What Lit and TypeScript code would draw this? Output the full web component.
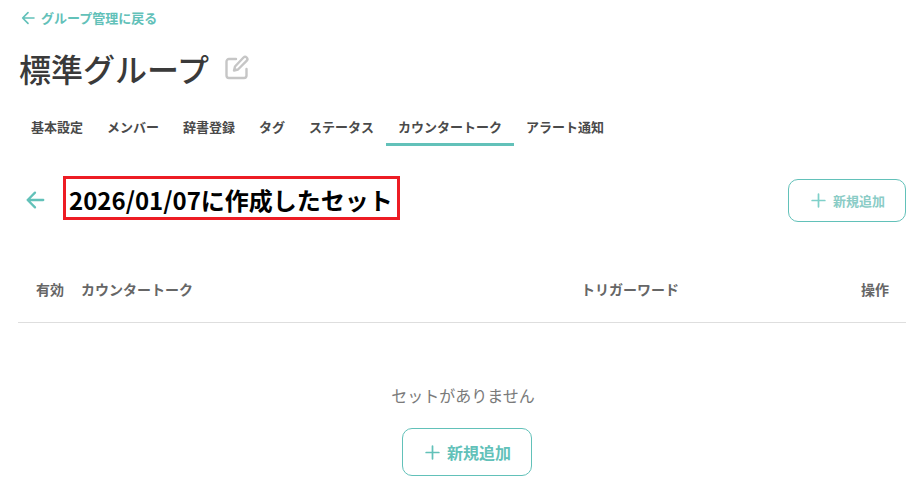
import { LitElement, html, css, svg } from "lit";
import { customElement } from "lit/decorators.js";

const arrow = svg`<path d="M21 12H4M12 4l-8 8 8 8" fill="none" stroke="currentColor" stroke-width="2.500" stroke-linecap="round" stroke-linejoin="round"/>`;
const plus = svg`<path d="M12 4v16M4 12h16" fill="none" stroke="currentColor" stroke-width="2.200" stroke-linecap="round"/>`;
const tabs = ["基本設定", "メンバー", "辞書登録", "タグ", "ステータス", "カウンタートーク", "アラート通知"];

@customElement("app-root")
export class AppRoot extends LitElement {
  static styles = css`
    :host { display: block; width: 921px; height: 501px; overflow: hidden; background: #fff; box-sizing: border-box; padding: 0 15px 0 18px; font-family: "Noto Sans CJK JP", "Noto Sans", sans-serif; color: #3c3c3c; }
    .back { display: flex; align-items: center; gap: 5px; height: 18px; padding: 9px 0 0 2px; color: #62c1b9; font-size: 13px; font-weight: 700; line-height: 18px; }
    .back svg { width: 16px; height: 16px; }
    .title { display: flex; align-items: center; gap: 15px; margin: 16px 0 0 1px; height: 50px; }
    h1 { margin: 0; font-size: 32px; font-weight: 500; line-height: 50px; color: #3a3a3a; }
    .edit { width: 26px; height: 26px; color: #c6c6c6; margin-top: -3px; }
    .tabs { display: flex; margin: 16px 0 0 1px; height: 37px; }
    .tab { padding: 0 12px; font-size: 13px; font-weight: 700; line-height: 35px; color: #4a4a4a; box-sizing: border-box; height: 37px; }
    .tab.on { border-bottom: 3px solid #62c1b9; }
    .head { display: flex; align-items: center; height: 43px; margin-top: 33px; }
    .head .arrow { width: 22px; height: 22px; color: #62c1b9; margin: -2px 17px 0 6px; }
    h2 { margin: -3px 0 0; align-self: flex-start; border: 3px solid #ed1c24; padding: 0 3px; width: 337px; height: 44px; box-sizing: border-box; font-size: 24px; font-weight: 700; line-height: 42px; color: #000; white-space: nowrap; }
    .spacer { flex: 1; }
    .btn { display: inline-flex; align-items: center; justify-content: center; border: 1px solid #62c1b9; border-radius: 10px; background: #fff; color: #62c1b9; box-sizing: border-box; padding: 0; font-family: inherit; font-weight: 700; }
    .btn svg { width: 19px; height: 19px; }
    .btn.small { width: 118px; height: 43px; gap: 5px; font-size: 13px; color: #8accc6; }
    .btn.small svg { color: #7fd0c9; }
    .btn.big { width: 130px; height: 48px; gap: 5px; font-size: 16px; }
    .thead { display: grid; grid-template-columns: 63px 500px 1fr auto; align-items: center; height: 58px; padding-bottom: 4px; margin-top: 38px; border-bottom: 1px solid #dedede; font-size: 14px; font-weight: 700; color: #666; }
    .thead .c0 { padding-left: 18px; }
    .thead .c3 { padding-right: 17px; }
    .empty { display: flex; flex-direction: column; align-items: center; }
    .empty p { margin: 60px 0 0 2px; font-size: 16px; line-height: 24px; color: #7a7a7a; }
    .empty .btn { margin: 21px 0 0 10px; }
  `;

  render() {
    return html`
      <div class="back"><svg viewBox="0 0 24 24">${arrow}</svg><span>グループ管理に戻る</span></div>
      <div class="title">
        <h1>標準グループ</h1>
        <svg class="edit" viewBox="0 0 26 26" fill="none" stroke="currentColor" stroke-width="2.4" stroke-linecap="round" stroke-linejoin="round">
          <path d="M12 5H5a2.500 2.500 0 0 0-2.500 2.500v14A2.500 2.500 0 0 0 5 24h15a2.500 2.500 0 0 0 2.500-2.500V15"/>
          <path d="M11 12.500 19.500 3.500a2.300 2.300 0 0 1 3.300 3.200L14 15.500l-4 1z"/>
        </svg>
      </div>
      <div class="tabs">
        ${tabs.map((t, i) => html`<div class="tab ${i === 5 ? "on" : ""}">${t}</div>`)}
      </div>
      <div class="head">
        <svg class="arrow" viewBox="0 0 24 24">${arrow}</svg>
        <h2>2026/01/07に作成したセット</h2>
        <div class="spacer"></div>
        <button class="btn small"><svg viewBox="0 0 24 24">${plus}</svg>新規追加</button>
      </div>
      <div class="thead">
        <div class="c0">有効</div><div>カウンタートーク</div><div>トリガーワード</div><div class="c3">操作</div>
      </div>
      <div class="empty">
        <p>セットがありません</p>
        <button class="btn big"><svg viewBox="0 0 24 24">${plus}</svg>新規追加</button>
      </div>
    `;
  }
}
